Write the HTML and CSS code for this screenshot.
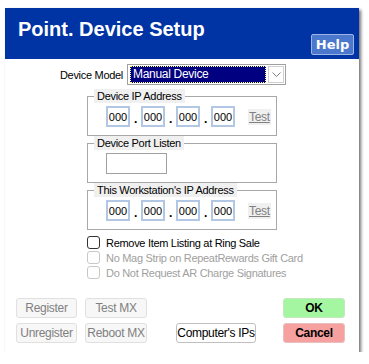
FILE: index.html
```html
<!DOCTYPE html>
<html lang="en">
  <head>
    <meta charset="UTF-8" />
    <title>Point. Device Setup</title>
    <link rel="stylesheet" href="styles.css">
  </head>
  <body>
    <div class="dialog">
      <!-- HEADER -->
      <div class="header">
        <h1 class="title">Point. Device Setup</h1>
        <button class="help">Help</button>
      </div>

      <div class="content">
        <div class="model-row">
          <label class="model-label">Device Model</label>
          <div class="select">
            <span class="select-value">Manual Device</span>
            <span class="select-arrow">
              <svg width="9" height="6" viewBox="0 0 9 6">
                <path d="M0.5 0.5 L4.5 4.5 L8.5 0.5" fill="none" stroke="#808080" stroke-width="1" />
              </svg>
            </span>
          </div>
        </div>

        <fieldset class="group">
          <legend>Device IP Address</legend>
          <div class="ip-row">
            <input class="ip" type="text" value="000" />
            <span class="dot">.</span>
            <input class="ip" type="text" value="000" />
            <span class="dot">.</span>
            <input class="ip" type="text" value="000" />
            <span class="dot">.</span>
            <input class="ip" type="text" value="000" />
            <a class="test">Test</a>
          </div>
        </fieldset>

        <fieldset class="group">
          <legend>Device Port Listen</legend>
          <div class="ip-row">
            <input class="port" type="text" value="" />
          </div>
        </fieldset>

        <fieldset class="group">
          <legend>This Workstation's IP Address</legend>
          <div class="ip-row">
            <input class="ip" type="text" value="000" />
            <span class="dot">.</span>
            <input class="ip" type="text" value="000" />
            <span class="dot">.</span>
            <input class="ip" type="text" value="000" />
            <span class="dot">.</span>
            <input class="ip" type="text" value="000" />
            <a class="test">Test</a>
          </div>
        </fieldset>

        <div class="checks">
          <label class="check"><span class="box"></span>Remove Item Listing at Ring Sale</label>
          <label class="check disabled"><span class="box"></span>No Mag Strip on RepeatRewards Gift Card</label>
          <label class="check disabled"><span class="box"></span>Do Not Request AR Charge Signatures</label>
        </div>

        <div class="buttons">
          <button class="btn off">Register</button>
          <button class="btn off">Test MX</button>
          <span></span>
          <button class="btn ok">OK</button>
          <button class="btn off">Unregister</button>
          <button class="btn off">Reboot MX</button>
          <button class="btn ips">Computer's IPs</button>
          <button class="btn cancel">Cancel</button>
        </div>
      </div>
    </div>
  </body>
</html>
```

FILE: styles.css
```css
body {
  margin: 0;
  background: #fff;
  font-family: "Liberation Sans", Arial, sans-serif;
  font-size: 11px;
  letter-spacing: -0.3px;
  color: #000;
}

.dialog {
  margin: 8px 0 0 5px;
  width: 354px;
  height: 344px;
  background: #fff;
  box-shadow: 2px 2px 3px rgba(0, 0, 0, 0.55);
}

.header {
  height: 51px;
  background: #0033a3;
  display: flex;
  justify-content: space-between;
}

.title {
  margin: 0;
  padding: 9px 0 0 13px;
  font-size: 20px;
  line-height: 24px;
  font-weight: bold;
  color: #fff;
  letter-spacing: 0;
}

.help {
  align-self: flex-end;
  margin: 0 5px 4px 0;
  width: 43px;
  height: 21px;
  padding: 0;
  background: #4b78cc;
  border: 1px solid #9db5e6;
  border-radius: 2px;
  color: #fff;
  font-family: "DejaVu Sans", sans-serif;
  font-weight: bold;
  font-size: 13px;
  letter-spacing: 0;
}

.content {
  padding-top: 5px;
}

.model-row {
  display: flex;
  align-items: center;
  gap: 4px;
  padding-left: 54px;
}

.model-label {
  width: 64px;
  text-align: right;
  white-space: nowrap;
}

.select {
  width: 154px;
  height: 19px;
  border: 1px solid #a0a0a0;
  display: flex;
  align-items: center;
  padding: 0 1px 0 2px;
}

.select-value {
  flex: 1;
  height: 15px;
  line-height: 15px;
  background: #000080;
  color: #fff;
  border: 1px dotted #ffff80;
  padding-left: 2px;
  font-size: 12px;
}

.select-arrow {
  margin-left: 2px;
  width: 16px;
  height: 17px;
  border: 1px solid #d0d0d0;
  box-sizing: border-box;
  display: flex;
  align-items: center;
  justify-content: center;
}

.group {
  margin: 4px 0 0 82px;
  width: 190px;
  box-sizing: border-box;
  padding: 3px 0 8px 18px;
  border: 1px solid #a8a8a8;
}

.group + .group {
  margin-top: 0;
}

legend {
  margin-left: -12px;
  padding: 0 3px;
  background: #f0f0f0;
  line-height: 14px;
  white-space: nowrap;
}

.ip-row {
  display: flex;
  align-items: center;
}

.ip,
.port {
  box-sizing: border-box;
  height: 21px;
  width: 24px;
  padding: 0;
  border: 2px solid #b2c7e3;
  font-family: inherit;
  font-size: 11px;
  letter-spacing: 0;
  text-align: center;
  color: #000;
}

.port {
  width: 61px;
  border: 1px solid #a0a0a0;
}

.dot {
  width: 11px;
  text-align: center;
  font-weight: bold;
  font-size: 12px;
  padding-top: 5px;
}

.test {
  margin-left: 13px;
  padding: 1px 1px;
  background: #f0f0f0;
  color: #808080;
  text-decoration: underline;
  font-size: 12px;
}

.checks {
  margin: 5px 0 0 82px;
  display: flex;
  flex-direction: column;
}

.check {
  display: flex;
  align-items: center;
  gap: 6px;
  height: 15px;
  white-space: nowrap;
}

.box {
  width: 11px;
  height: 11px;
  border: 1px solid #333;
  border-radius: 3px;
}

.check.disabled {
  color: #a0a0a0;
}

.check.disabled .box {
  border-color: #c8c8c8;
}

.buttons {
  margin: 18px 0 0 11px;
  display: grid;
  grid-template-columns: 69px 91px 107px 62px;
  row-gap: 5px;
}

.btn {
  height: 20px;
  padding: 0;
  border: 1px solid #e0e0e0;
  border-radius: 3px;
  background: #f7f7f7;
  font-family: inherit;
  font-size: 12px;
  letter-spacing: -0.3px;
  white-space: nowrap;
  color: #808080;
}

.btn.off:nth-child(1),
.btn.off:nth-child(5) {
  width: 61px;
}

.btn.off:nth-child(2),
.btn.off:nth-child(6) {
  width: 62px;
}

.btn.ips {
  width: 80px;
  background: #fff;
  border-color: #c0c0c0;
  color: #000;
}

.btn.ok,
.btn.cancel {
  width: 62px;
  color: #000;
  font-weight: bold;
}

.btn.ok {
  background: #a4f7a0;
  border-color: #c4e8c0;
}

.btn.cancel {
  background: #f7a0a0;
  border-color: #e8c0c0;
}
```
